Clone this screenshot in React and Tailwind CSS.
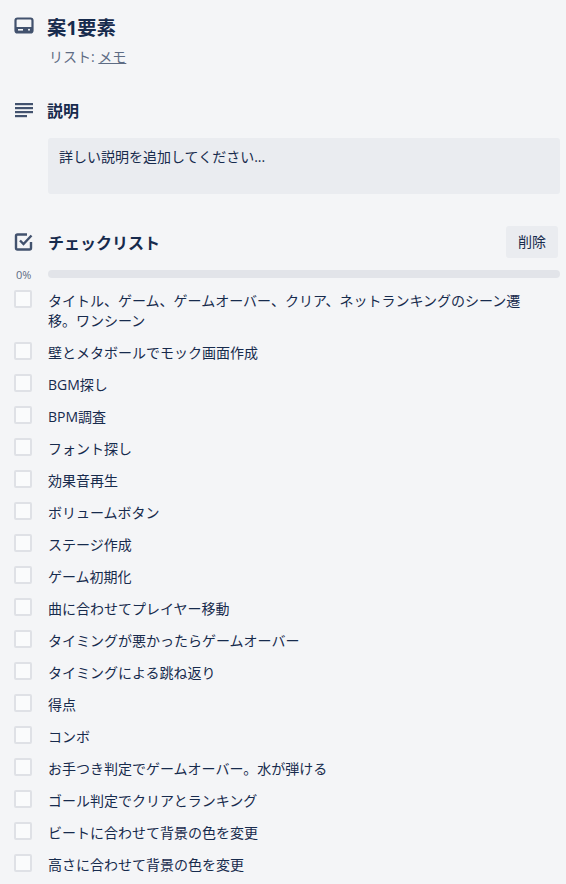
const items = [
  "タイトル、ゲーム、ゲームオーバー、クリア、ネットランキングのシーン遷移。ワンシーン",
  "壁とメタボールでモック画面作成",
  "BGM探し",
  "BPM調査",
  "フォント探し",
  "効果音再生",
  "ボリュームボタン",
  "ステージ作成",
  "ゲーム初期化",
  "曲に合わせてプレイヤー移動",
  "タイミングが悪かったらゲームオーバー",
  "タイミングによる跳ね返り",
  "得点",
  "コンボ",
  "お手つき判定でゲームオーバー。水が弾ける",
  "ゴール判定でクリアとランキング",
  "ビートに合わせて背景の色を変更",
  "高さに合わせて背景の色を変更",
];

export default function App() {
  return (
    <div className="h-[884px] w-[566px] overflow-hidden bg-[#f4f5f7] font-['Open_Sans','Noto_Sans_CJK_JP',sans-serif] text-[14px] leading-[20px] text-[#172b4d]">
      <div className="pl-[14px] pr-[6px] pt-[15px]">
        <header className="flex items-start">
          <svg className="mt-[2px] h-[18px] w-[20px] shrink-0" viewBox="0 0 20 18" fill="none">
            <rect x="1.5" y="1.5" width="17" height="14" rx="2" stroke="#42526e" strokeWidth="2.2" />
            <rect x="2" y="10" width="16" height="5.5" fill="#42526e" />
            <rect x="4" y="12" width="5" height="1.6" fill="#f4f5f7" />
            <circle cx="15" cy="12.8" r="1" fill="#f4f5f7" />
          </svg>
          <div className="ml-[13px]">
            <h1 className="text-[19.3px] font-bold leading-[26px]">案1要素</h1>
            <p className="ml-[2px] mt-[6px] text-[#5e6c84]">
              リスト: <span className="underline">メモ</span>
            </p>
          </div>
        </header>

        <section className="mt-[32px]">
          <div className="flex items-center">
            <svg className="h-[18px] w-[20px] shrink-0" viewBox="0 0 20 18" fill="#42526e">
              <rect x="1" y="1" width="18" height="2.2" />
              <rect x="1" y="5" width="18" height="2.2" />
              <rect x="1" y="9" width="18" height="2.2" />
              <rect x="1" y="13" width="12" height="2.2" />
            </svg>
            <h2 className="ml-[13px] text-[16px] font-bold leading-[24px]">説明</h2>
          </div>
          <div className="ml-[34px] mt-[15px] h-[56px] rounded-[3px] bg-[#eaecf0] px-[11px] py-[9px]">
            詳しい説明を追加してください...
          </div>
        </section>

        <section className="mt-[32px]">
          <div className="flex h-[32px] items-center">
            <svg className="h-[18px] w-[20px] shrink-0" viewBox="0 0 20 18" fill="none">
              <path d="M17 9v6a1.5 1.5 0 0 1-1.5 1.5h-12A1.5 1.5 0 0 1 2 15V3a1.5 1.5 0 0 1 1.5-1.5H13" stroke="#42526e" strokeWidth="2.4" />
              <path d="M6 7.5l3.5 3.5L17.5 2.5" stroke="#42526e" strokeWidth="2.4" />
            </svg>
            <h2 className="ml-[14px] flex-1 pt-[2px] text-[16px] font-bold leading-[24px]">チェックリスト</h2>
            <button className="mr-[2px] h-[32px] w-[52px] rounded-[3px] bg-[#eaecf0] text-center">削除</button>
          </div>

          <div className="mt-[12px] flex h-[8px] items-center">
            <span className="w-[34px] shrink-0 pl-[2px] pt-[2px] text-[11px] leading-[8px] text-[#5e6c84]">0%</span>
            <div className="h-[8px] flex-1 rounded bg-[#e2e4e9]" />
          </div>

          <ul className="mt-[12px] flex flex-col gap-[12px]">
            {items.map((t) => (
              <li key={t} className="flex items-start">
                <span className="h-[18px] w-[18px] shrink-0 rounded-[2px] border-2 border-[#dfe1e6] bg-[#fafbfc]" />
                <span className="-mb-[1px] ml-[16px] pr-[32px] pt-[1px] leading-[20px]">{t}</span>
              </li>
            ))}
          </ul>
        </section>
      </div>
    </div>
  );
}
